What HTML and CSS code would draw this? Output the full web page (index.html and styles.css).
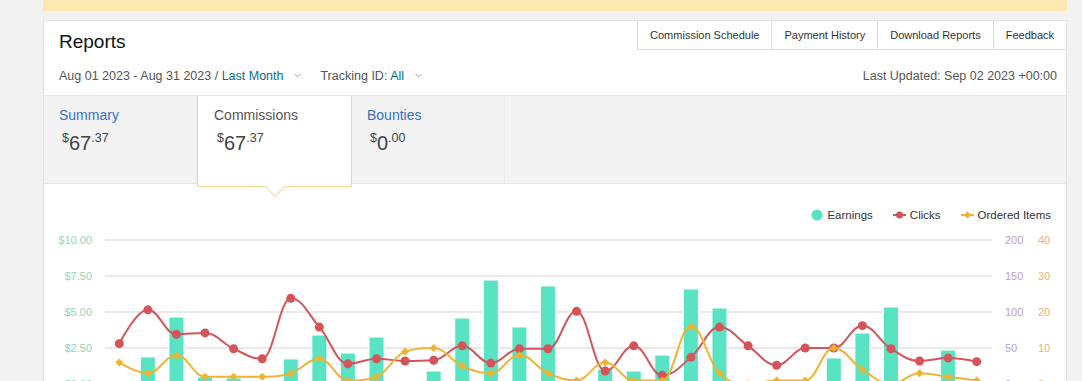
FILE: index.html
```html
<!DOCTYPE html>
<html>
<head>
    <title>Reports</title>
    <link rel="stylesheet" href="styles.css">
</head>
<body>
<div class="page">
    <div class="notice"></div>
    <div class="card">
        <div class="card-head">
            <h1>Reports</h1>
            <div class="links">
                <a href="#">Commission Schedule</a>
                <a href="#">Payment History</a>
                <a href="#">Download Reports</a>
                <a href="#">Feedback</a>
            </div>
        </div>

        <div class="filters">
            <div class="range">
                Aug 01 2023 - Aug 31 2023 / <a href="#">Last Month</a>
                <svg class="chev" width="7" height="5" viewBox="0 0 7 5"><path d="M0.5 0.8 L3.5 3.8 L6.5 0.8" fill="none" stroke="#999" stroke-width="1"/></svg>
                <span class="tracking">Tracking ID: <a href="#">All</a></span>
                <svg class="chev" width="7" height="5" viewBox="0 0 7 5"><path d="M0.5 0.8 L3.5 3.8 L6.5 0.8" fill="none" stroke="#999" stroke-width="1"/></svg>
            </div>
            <div class="updated">Last Updated: Sep 02 2023 +00:00</div>
        </div>

        <div class="tabs">
            <div class="tab">
                <div class="tab-name">Summary</div>
                <div class="amount"><span class="small">$</span>67<span class="small">.37</span></div>
            </div>
            <div class="tab active">
                <div class="tab-name">Commissions</div>
                <div class="amount"><span class="small">$</span>67<span class="small">.37</span></div>
            </div>
            <div class="tab">
                <div class="tab-name">Bounties</div>
                <div class="amount"><span class="small">$</span>0<span class="small">.00</span></div>
            </div>
        </div>

        <div class="chart">
            <div class="legend">
                <div class="legend-item">
                    <svg width="12" height="12"><circle cx="6" cy="6" r="5.5" fill="#58e3c3"/></svg>
                    Earnings
                </div>
                <div class="legend-item">
                    <svg width="13" height="12"><line x1="0" y1="6" x2="13" y2="6" stroke="#d5545a" stroke-width="2"/><circle cx="6.5" cy="6" r="3.5" fill="#d5545a"/></svg>
                    Clicks
                </div>
                <div class="legend-item">
                    <svg width="13" height="12"><line x1="0" y1="6" x2="13" y2="6" stroke="#f0b331" stroke-width="2"/><path d="M6.5 2.5 L10 6 L6.5 9.5 L3 6 Z" fill="#f0b331"/></svg>
                    Ordered Items
                </div>
            </div>
            <svg id="plot" width="1022" height="180"></svg>
        </div>
    </div>
</div>

<script>
    const earnings = [0, 1.88, 4.65, 0.49, 0.42, 0, 1.74, 3.40, 2.15, 3.26, 0, 0.90, 4.58, 7.22, 3.96, 6.81,
        0, 1.04, 0.90, 2.01, 6.60, 5.28, 0, 0, 0, 1.81, 3.54, 5.35, 0, 2.36, 0];
    const clicks = [56, 103, 69, 71, 49, 35, 119, 79, 28, 35, 32, 33, 53, 29, 49, 49,
        101, 18, 53, 12, 37, 79, 53, 26, 50, 50, 81, 49, 32, 36, 31];
    const items = [6, 3, 8, 2, 2, 2, 3, 7, 1, 2, 9, 10, 5, 3, 8, 3,
        1, 6, 1, 1, 16, 3, 0, 1, 1, 10, 4, 0, 3, 2, 1];

    const plotLeft = 61;
    const plotWidth = 886;
    const plotTop = 17;
    const step = 36;
    const zero = plotTop + step * 4;
    const slot = plotWidth / 31;

    function px(i) {
        return plotLeft + slot * (i + 0.5);
    }

    // same smoothing as a highcharts spline
    function spline(pts) {
        let d = `M${pts[0][0]} ${pts[0][1]}`;
        let prev = pts[0];
        for (let i = 1; i < pts.length; i++) {
            const [x, y] = pts[i];
            const [lx, ly] = pts[i - 1];
            let lcx = x, lcy = y, rcx = x, rcy = y;
            if (i < pts.length - 1) {
                const [nx, ny] = pts[i + 1];
                lcx = (1.5 * x + lx) / 2.5;
                lcy = (1.5 * y + ly) / 2.5;
                rcx = (1.5 * x + nx) / 2.5;
                rcy = (1.5 * y + ny) / 2.5;
                const corr = ((rcy - lcy) * (rcx - x)) / (rcx - lcx) + y - rcy;
                lcy += corr;
                rcy += corr;
                if (lcy > ly && lcy > y) {
                    lcy = Math.max(ly, y);
                    rcy = 2 * y - lcy;
                } else if (lcy < ly && lcy < y) {
                    lcy = Math.min(ly, y);
                    rcy = 2 * y - lcy;
                }
                if (rcy > ny && rcy > y) {
                    rcy = Math.max(ny, y);
                    lcy = 2 * y - rcy;
                } else if (rcy < ny && rcy < y) {
                    rcy = Math.min(ny, y);
                    lcy = 2 * y - rcy;
                }
            }
            d += ` C${prev[0]} ${prev[1]} ${lcx} ${lcy} ${x} ${y}`;
            prev = [rcx, rcy];
        }
        return d;
    }

    let out = "";
    const money = ["$10.00", "$7.50", "$5.00", "$2.50", "$0.00"];
    const clickTicks = [200, 150, 100, 50, 0];
    const itemTicks = [40, 30, 20, 10, 0];

    for (let k = 0; k < 5; k++) {
        const y = plotTop + step * k;
        out += `<line x1="${plotLeft}" y1="${y}" x2="${plotLeft + plotWidth + 1}" y2="${y}" stroke="#e9e9e9" stroke-width="2"/>`;
        out += `<text x="48" y="${y + 4}" text-anchor="end" fill="#8fd5c2">${money[k]}</text>`;
        out += `<text x="961" y="${y + 4}" fill="#c29dc2">${clickTicks[k]}</text>`;
        out += `<text x="994" y="${y + 4}" fill="#dfb47c">${itemTicks[k]}</text>`;
    }

    earnings.forEach((v, i) => {
        const h = v * 14.4;
        if (h > 0) {
            out += `<rect x="${px(i) - 7.5}" y="${zero - h}" width="15" height="${h}" fill="#58e3c3" stroke="#fff" stroke-width="1"/>`;
        }
    });

    const clickPts = clicks.map((v, i) => [px(i), zero - v * 0.72]);
    out += `<path d="${spline(clickPts)}" fill="none" stroke="#d5545a" stroke-width="2"/>`;
    clickPts.forEach(p => {
        out += `<circle cx="${p[0]}" cy="${p[1]}" r="4.5" fill="#d5545a"/>`;
    });

    const itemPts = items.map((v, i) => [px(i), zero - v * 3.6]);
    out += `<path d="${spline(itemPts)}" fill="none" stroke="#f0b331" stroke-width="2"/>`;
    itemPts.forEach(p => {
        const [x, y] = p;
        out += `<path d="M${x} ${y - 4} L${x + 4} ${y} L${x} ${y + 4} L${x - 4} ${y} Z" fill="#f0b331"/>`;
    });

    document.getElementById("plot").innerHTML = out;
</script>
</body>
</html>
```

FILE: styles.css
```css
body {
    margin: 0;
    background-color: #f2f2f2;
    font-family: "Liberation Sans", Arial, sans-serif;
    color: #333;
}

.page {
    width: 1024px;
    margin-left: 43px;
}

.notice {
    height: 11px;
    background-color: #fee9b0;
}

.card {
    margin-top: 9px;
    background-color: #fff;
    border: 1px solid #e2e2e2;
    border-bottom: none;
}

.card-head {
    display: flex;
    justify-content: space-between;
    align-items: flex-start;
}

h1 {
    margin: 0;
    padding: 9px 0 0 15px;
    font-size: 19px;
    line-height: 24px;
    font-weight: normal;
    color: #111;
}

.links {
    display: flex;
}

.links a {
    padding: 0 12px;
    line-height: 28px;
    font-size: 11px;
    color: #333;
    text-decoration: none;
    border-left: 1px solid #ddd;
    border-bottom: 1px solid #ddd;
}

.filters {
    display: flex;
    justify-content: space-between;
    padding: 12px 9px 0 15px;
    font-size: 12.5px;
    line-height: 20px;
    color: #555;
}

.filters a {
    color: #007185;
    text-decoration: none;
}

.chev {
    margin: 0 0 2px 7px;
}

.tracking {
    margin-left: 16px;
}

.tabs {
    display: flex;
    align-items: flex-start;
    margin-top: 9px;
    height: 87px;
    background-color: #f3f3f3;
    border-top: 1px solid #e6e6e6;
    border-bottom: 1px solid #e6e6e6;
}

.tab {
    width: 153px;
    height: 87px;
    box-sizing: border-box;
    padding: 10px 15px 0;
    border-right: 1px solid #e9e9e9;
}

.tab.active {
    position: relative;
    z-index: 1;
    width: 155px;
    height: 91px;
    padding-left: 16px;
    background-color: #fff;
    border: 1px solid #f5d592;
    border-top: none;
}

.tab.active::after {
    content: "";
    position: absolute;
    left: 50%;
    bottom: -8px;
    width: 15px;
    height: 15px;
    box-sizing: border-box;
    background-color: #fff;
    border-right: 1px solid #f5d592;
    border-bottom: 1px solid #f5d592;
    transform: translateX(-50%) rotate(45deg);
}

.tab-name {
    font-size: 14px;
    line-height: 18px;
    color: #3a70c0;
}

.tab.active .tab-name {
    color: #555;
}

.amount {
    margin-top: 6px;
    padding-left: 3px;
    font-size: 20px;
    line-height: 26px;
    color: #444;
}

.amount .small {
    font-size: 12.5px;
    line-height: 1;
    vertical-align: 8px;
}

.chart {
    padding-top: 23px;
}

.legend {
    display: flex;
    justify-content: flex-end;
    gap: 20px;
    padding-right: 15px;
    font-size: 11.5px;
    line-height: 16px;
    color: #333;
}

.legend-item {
    display: flex;
    align-items: center;
    gap: 4px;
}

#plot {
    display: block;
    font-size: 11px;
}
```
